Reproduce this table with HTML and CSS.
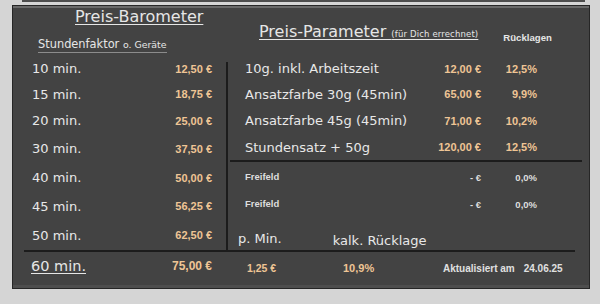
FILE: index.html
```html
<!DOCTYPE html>
<html lang="de">
<head>
<meta charset="utf-8">
<title>Preis-Barometer</title>
<link rel="stylesheet" href="styles.css">
</head>
<body>
<div class="topline"></div>
<div class="panel">
  <div class="main">
    <div class="lhead">
      <h1 class="title t-left">Preis-Barometer</h1>
      <div class="sub"><span class="sub-in">Stundenfaktor <small>o. Geräte</small></span></div>
    </div>
    <div class="rhead">
      <h2 class="title t-right">Preis-Parameter <small>(für Dich errechnet)</small></h2>
      <div class="colhead">Rücklagen</div>
    </div>
    <div class="lrows">
      <div class="lrow"><span class="lab">10 min.</span><span class="price">12,50 €</span></div>
      <div class="lrow"><span class="lab">15 min.</span><span class="price">18,75 €</span></div>
      <div class="lrow"><span class="lab">20 min.</span><span class="price">25,00 €</span></div>
      <div class="lrow"><span class="lab">30 min.</span><span class="price">37,50 €</span></div>
      <div class="lrow"><span class="lab">40 min.</span><span class="price">50,00 €</span></div>
      <div class="lrow"><span class="lab">45 min.</span><span class="price">56,25 €</span></div>
      <div class="lrow"><span class="lab">50 min.</span><span class="price">62,50 €</span></div>
    </div>
    <div class="rbody">
      <div class="rrow h25"><span class="lab">10g. inkl. Arbeitszeit</span><span class="price">12,00 €</span><span class="price">12,5%</span></div>
      <div class="rrow h26"><span class="lab">Ansatzfarbe 30g (45min)</span><span class="price">65,00 €</span><span class="price">9,9%</span></div>
      <div class="rrow h27"><span class="lab">Ansatzfarbe 45g (45min)</span><span class="price">71,00 €</span><span class="price">10,2%</span></div>
      <div class="rrow h26"><span class="lab">Stundensatz + 50g</span><span class="price">120,00 €</span><span class="price">12,5%</span></div>
      <div class="rline"></div>
      <div class="rrow h28 free"><span class="flab">Freifeld</span><span class="fval">- €</span><span class="fval">0,0%</span></div>
      <div class="rrow h26 free"><span class="flab">Freifeld</span><span class="fval">- €</span><span class="fval">0,0%</span></div>
      <div class="rlast"><span class="lab pmin">p. Min.</span><span class="lab kalk">kalk. Rücklage</span></div>
    </div>
  </div>
  <div class="foot">
    <div class="f1"><span class="big">60 min.</span><span class="price p12">75,00 €</span></div>
    <div class="f2"><span class="price p105">1,25 €</span></div>
    <div class="f3"><span class="price">10,9%</span></div>
    <div class="f4"><span class="upd">Aktualisiert am</span><span class="upd date">24.06.25</span></div>
  </div>
</div>
</body>
</html>
```

FILE: styles.css
```css
html, body {
  margin: 0;
  padding: 0;
}
body {
  width: 600px;
  height: 304px;
  overflow: hidden;
  background: #d5d5d5;
  font-family: "DejaVu Sans", "Noto Sans", sans-serif;
}
.topline {
  height: 2px;
  margin: 0 15px 0 22px;
  background: #4d4d4d;
}
.panel {
  margin: 3px 0 0 12px;
  width: 578px;
  height: 284px;
  box-sizing: border-box;
  background: #434343;
  border: 1px solid #262626;
  box-shadow: inset 0 2px 0 #6a6a6a, inset 0 -3px 0 #4e4e4e;
  display: flex;
  flex-direction: column;
  color: #e8e8e8;
}
.main {
  display: grid;
  grid-template-columns: 213px 1fr;
  grid-template-rows: 50px 194px;
}
.title {
  margin: 0;
  font-weight: normal;
  font-size: 16px;
  line-height: 19px;
  color: #e6e6e6;
  white-space: nowrap;
  text-decoration: underline;
  text-decoration-thickness: 1px;
  text-underline-offset: 2px;
}
.t-left {
  margin: 1px 0 0 62px;
}
.sub {
  margin: 10px 0 0 25px;
  line-height: 14px;
}
.sub-in {
  display: inline-block;
  font-size: 11.4px;
  line-height: 14px;
  color: #e6e6e6;
  border-bottom: 1px solid #8c8c8c;
  white-space: nowrap;
}
.sub-in small {
  font-size: 9.4px;
}
.rhead {
  display: flex;
  align-items: flex-start;
  padding: 16px 0 0 33px;
}
.t-right small {
  font-size: 8.5px;
  letter-spacing: 0.15px;
}
.colhead {
  margin: 10px 0 0 25px;
  font-family: "Liberation Sans", Arial, sans-serif;
  font-weight: bold;
  font-size: 9.6px;
  line-height: 12px;
  color: #e6e6e6;
}
.lrows {
  display: grid;
  grid-template-rows: 25px 26px 27px 29px 29px 28px 30px;
}
.lrow {
  display: flex;
  align-items: center;
  justify-content: space-between;
  padding: 0 14px 0 19px;
}
.lab {
  font-size: 13px;
  color: #e8e8e8;
  white-space: nowrap;
}
.price {
  font-family: "Liberation Sans", Arial, sans-serif;
  font-weight: bold;
  font-size: 11px;
  color: #efc595;
  text-align: right;
  white-space: nowrap;
}
.rbody {
  display: flex;
  flex-direction: column;
  background: linear-gradient(#1c1c1c, #1c1c1c) no-repeat 0 6px / 2px calc(100% - 4px);
}
.rrow {
  display: grid;
  grid-template-columns: minmax(0, 1fr) 62px 56px;
  align-items: center;
  padding: 0 52px 0 19px;
}
.h25 { height: 25px; }
.h26 { height: 26px; }
.h27 { height: 27px; }
.h28 { height: 28px; }
.rline {
  height: 2px;
  margin: 0 7px 0 4px;
  background: #1c1c1c;
}
.flab, .fval {
  font-family: "Liberation Sans", Arial, sans-serif;
  font-weight: bold;
  font-size: 9.5px;
  color: #dedede;
  white-space: nowrap;
}
.fval {
  text-align: right;
  padding-top: 3px;
}
.rlast {
  height: 34px;
  display: flex;
  align-items: flex-start;
}
.pmin {
  margin: 15px 0 0 12px;
}
.kalk {
  margin: 17px 0 0 51px;
}
.foot {
  display: flex;
  align-items: center;
  height: 38px;
  box-sizing: border-box;
  margin: 0 14px 0 11px;
  border-top: 2px solid #1c1c1c;
  padding-bottom: 8px;
}
.f1 {
  width: 188px;
  box-sizing: border-box;
  padding-left: 7px;
  display: flex;
  align-items: center;
  justify-content: space-between;
}
.big {
  font-size: 14.5px;
  color: #e6e6e6;
  text-decoration: underline;
  text-decoration-thickness: 1px;
  text-underline-offset: 2px;
}
.p12 { font-size: 12px; }
.p105 { font-size: 10.5px; }
.f2 {
  width: 131px;
  box-sizing: border-box;
  padding-left: 35px;
}
.f3 {
  width: 100px;
}
.upd {
  font-family: "Liberation Sans", Arial, sans-serif;
  font-weight: bold;
  font-size: 10px;
  color: #e0e0e0;
  white-space: nowrap;
}
.date {
  margin-left: 9px;
}
```
